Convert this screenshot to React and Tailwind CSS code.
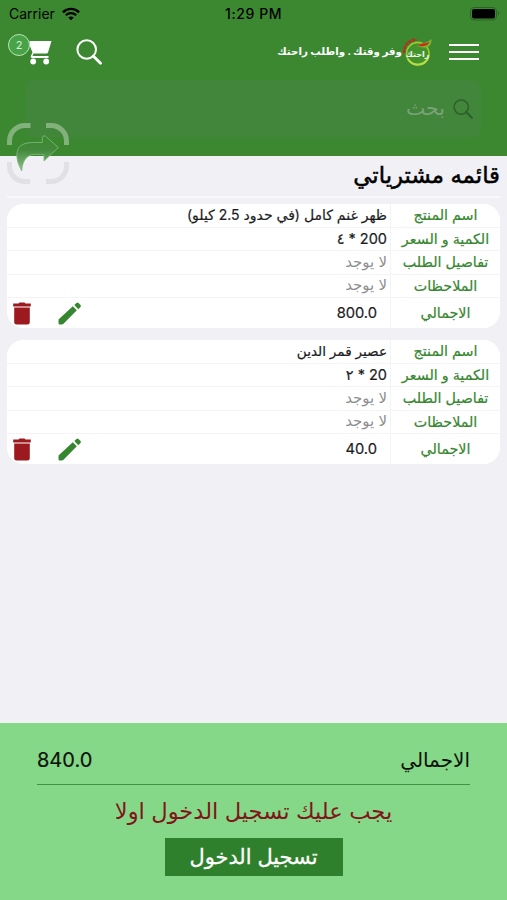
const items = [
  { name: 'ظهر غنم كامل (في حدود 2.5 كيلو)', price: '200', qty: '٤', total: '800.0', nameSize: 'text-[14px]' },
  { name: 'عصير قمر الدين', price: '20', qty: '٢', total: '40.0', nameSize: 'text-[13.6px]' },
];

function StatusBar() {
  return (
    <div className="relative flex h-7 items-center justify-between pl-[9px] pr-[7px] text-black">
      <div className="flex items-center gap-[7px]">
        <span className="text-[14px] leading-none">Carrier</span>
        <svg className="h-[14px] w-[18px]" viewBox="0 0 19 14" fill="none" stroke="currentColor">
          <path d="M1 5.2C5.8.4 13.2.4 18 5.2" strokeWidth="2.6" />
          <path d="M4 8.3c3.2-3 7.8-3 11 0" strokeWidth="2.4" />
          <path d="M9.5 13.6 6.6 10.8c1.7-1.5 4.1-1.5 5.8 0z" fill="currentColor" stroke="none" />
        </svg>
      </div>
      <span className="absolute left-[225px] top-[7px] text-[14px] font-medium leading-none tracking-[0.6px]">1:29 PM</span>
      <svg className="h-[14px] w-[30px]" viewBox="0 0 30 14">
        <rect x="0.5" y="0.5" width="26" height="12.5" rx="3.5" fill="none" stroke="#2b6424" />
        <rect x="2" y="2" width="23" height="9.5" rx="2" fill="#000" />
        <path d="M28 4.5c1.6.7 1.6 3.5 0 4.2z" fill="#2b6424" />
      </svg>
    </div>
  );
}

function SearchIcon({ className }) {
  return (
    <svg className={className} viewBox="0 0 26 26" fill="none" stroke="currentColor">
      <circle cx="10.7" cy="10.5" r="9.3" strokeWidth="2" />
      <path d="m17.2 17 7.3 7.3" strokeWidth="2.8" strokeLinecap="round" />
    </svg>
  );
}

function CartIcon() {
  return (
    <svg className="h-[26px] w-6" viewBox="0 0 24 26" fill="currentColor">
      <path d="M1.500 2h22L20 13.500q-.4 1-1.500 1H5.500L4.500 17h16v2H4q-2-.4-1.200-2l1.700-3.500L1.500 6z" />
      <circle cx="5.200" cy="22.500" r="2.900" />
      <circle cx="18.200" cy="22.500" r="2.900" />
    </svg>
  );
}

function PencilIcon() {
  return (
    <svg className="h-[23px] w-6" viewBox="0 0 24 23" fill="#36862f">
      <path d="M.5 17.500 14.800 4.300l4 4L5.500 21.700q-.7.800-1.800.8H1.800Q.5 22.500.5 21z" />
      <path d="m16.300 3 2.200-2q1-.8 2 .1l2 2q.9 1 0 2L20.300 7.300z" />
    </svg>
  );
}

function TrashIcon() {
  return (
    <svg className="h-[23px] w-[18px]" viewBox="0 0 18 23" fill="#9c1a1f">
      <path d="M.2 1.500h5.300L6.500.4h5l1 1.100h5.300v2.900H.2z" />
      <path d="M1.200 5.500h15.600v14.700q0 2.300-2.300 2.300h-11q-2.300 0-2.300-2.300z" />
    </svg>
  );
}

function Logo() {
  return (
    <div className="relative h-7 w-[29px]">
      <svg className="h-7 w-[29px]" viewBox="0 0 29 28" fill="none">
        <circle cx="14.8" cy="15.700" r="11.300" fill="#43932c" stroke="#9cc832" strokeWidth="1.600" />
        <path d="M5 21a11.300 11.300 0 0 0 20-1" stroke="#b9dc45" strokeWidth="2" />
        <path d="M1.200 15C.5 7.500 6 1.700 13.500 1.800" stroke="#b5321f" strokeWidth="2.600" strokeDasharray="3.200 .7" />
        <path d="M14 8.500c3.500-4.500 9-2.500 14.500-7.500.2 4.500-1.500 8-5 8.500-3 .5-6.500-.5-9.500-1z" fill="#79b52c" />
        <path d="M15 8.200c2.500-3.700 6.500-2.200 11.500-4.200-1.500 3.700-5.500 4.600-11.500 4.200z" fill="#cf2a1e" />
      </svg>
      <span className="absolute inset-x-0 top-[9px] flex h-[14px] items-center justify-center text-[8px] font-bold leading-[14px] text-[#eef6ea]">
        راحتك
      </span>
    </div>
  );
}

function ShareBadge() {
  return (
    <svg className="absolute left-[7px] top-[122px] h-[63px] w-[62px]" viewBox="0 0 62 63" fill="none">
      <defs>
        <linearGradient id="arrow" x1="0" y1="14" x2="0" y2="49" gradientUnits="userSpaceOnUse">
          <stop offset="0" stopColor="#3c8831" />
          <stop offset="0.4" stopColor="#43893b" />
          <stop offset="0.75" stopColor="#6fa86b" />
          <stop offset="1" stopColor="#9cc59a" />
        </linearGradient>
      </defs>
      <g strokeWidth="5">
        <path d="M2.500 23v-4A15.500 15.500 0 0 1 18 3.500h5.500M39 3.500h5A15.500 15.500 0 0 1 59.500 19v4" stroke="#83b17c" />
        <path d="M2.500 40v4A15.500 15.500 0 0 0 18 59.500h5M39 59.500h5A15.500 15.500 0 0 0 59.500 44v-4" stroke="#e1e1e4" />
      </g>
      <path
        d="M14.700 48.700C11 42 9 36 10.300 29.300 12.500 21 20 20 35.300 20.500V15.500q.5-2.500 3-1.500L51.300 25.500 37 39v-6.300c-9-.7-14-.5-17.500 3-3 3-4.300 7-4.800 13z"
        fill="url(#arrow)"
        stroke="#7ab876"
        strokeWidth="0.9"
        strokeLinejoin="round"
      />
    </svg>
  );
}

function Header() {
  return (
    <header className="relative h-[156px] bg-[#3c8831]">
      <StatusBar />
      <div className="flex h-12 items-center justify-between pl-2 pr-7 text-white">
        <div className="relative flex items-center gap-6 pl-5">
          <CartIcon />
          <span className="absolute left-0 top-[-5px] flex size-[22px] items-center justify-center rounded-full border-[1.5px] border-[#b9e6b5] bg-[#47a248] text-[11px] text-[#d6f0d3]">
            2
          </span>
          <SearchIcon className="size-[26px]" />
        </div>
        <div className="flex items-center" dir="rtl">
          <div className="flex w-[30px] flex-col gap-[5px]">
            <span className="h-0.5 bg-white" />
            <span className="h-0.5 bg-white" />
            <span className="h-0.5 bg-white" />
          </div>
          <div className="mr-[17px]"><Logo /></div>
          <span className="mr-[1px] whitespace-nowrap text-[10.3px] font-bold">وفر وقتك . واطلب راحتك</span>
        </div>
      </div>
      <div dir="rtl" className="mx-[26px] mt-1 flex h-[57px] items-center rounded-lg bg-[#42863c] pr-2">
        <SearchIcon className="size-5 text-[#2d602b]" />
        <span className="mr-2 text-[20.5px] text-[#7ba277]">بحث</span>
      </div>
      <ShareBadge />
    </header>
  );
}

function Label({ children }) {
  return (
    <div className="flex w-[110px] items-center justify-center border-l border-[#f4f4f8] pb-px text-[14.3px] text-[#36862f] [-webkit-text-stroke:0.2px]">
      {children}
    </div>
  );
}

function Row({ label, children }) {
  return (
    <div className="flex h-[23.6px] border-b border-[#f4f4f8]">
      <Label>{label}</Label>
      <div className="flex flex-1 items-center pb-px pr-[3px]">{children}</div>
    </div>
  );
}

function ItemCard({ item }) {
  return (
    <div className="h-[124px] overflow-hidden rounded-[16px] bg-white text-[#1c1c1e]">
      <Row label="اسم المنتج">
        <span className={`${item.nameSize} [-webkit-text-stroke:0.2px]`}>{item.name}</span>
      </Row>
      <Row label="الكمية و السعر">
        <bdi dir="ltr" className="text-[14.5px] [-webkit-text-stroke:0.2px]">{item.qty} * {item.price}</bdi>
      </Row>
      <Row label="تفاصيل الطلب"><span className="text-[15px] text-[#8e8e90]">لا يوجد</span></Row>
      <Row label="الملاحظات"><span className="text-[15px] text-[#8e8e90]">لا يوجد</span></Row>
      <div className="flex h-[29.6px]">
        <Label>الاجمالي</Label>
        <div className="flex flex-1 items-center pl-1.5 pr-[13px]">
          <span className="flex-1 text-[14.7px] [-webkit-text-stroke:0.2px]">{item.total}</span>
          <PencilIcon />
          <div className="mr-[27px]"><TrashIcon /></div>
        </div>
      </div>
    </div>
  );
}

export default function App() {
  return (
    <div className="flex h-[900px] w-[507px] flex-col overflow-hidden bg-[#f0f0f5] font-['Inter','DejaVu_Sans',sans-serif]">
      <Header />
      <main dir="rtl" className="flex-1 px-[7px]">
        <h1 className="flex h-[42px] items-center border-b-2 border-[#f9f9fc] pb-0.5 text-[22.8px] text-black [-webkit-text-stroke:0.5px]">
          قائمه مشترياتي
        </h1>
        <div className="mt-[6px] flex flex-col gap-3">
          {items.map((item) => (
            <ItemCard key={item.name} item={item} />
          ))}
        </div>
      </main>
      <footer dir="rtl" className="flex h-[177px] flex-col items-center bg-[#85d887] px-[37px]">
        <div className="flex h-[62px] w-full items-center justify-between border-b border-[#3f9343] pt-3 text-[20px] text-[#0b120b]">
          <span>الاجمالي</span>
          <span className="[-webkit-text-stroke:0.2px]">840.0</span>
        </div>
        <p className="mt-2 flex h-9 items-center whitespace-nowrap text-[22.6px] text-[#80151c]">يجب عليك تسجيل الدخول اولا</p>
        <button className="mt-[9px] h-[38px] w-[178px] bg-[#2e802d] text-[20.9px] text-white [-webkit-text-stroke:0.3px]">
          تسجيل الدخول
        </button>
      </footer>
    </div>
  );
}
